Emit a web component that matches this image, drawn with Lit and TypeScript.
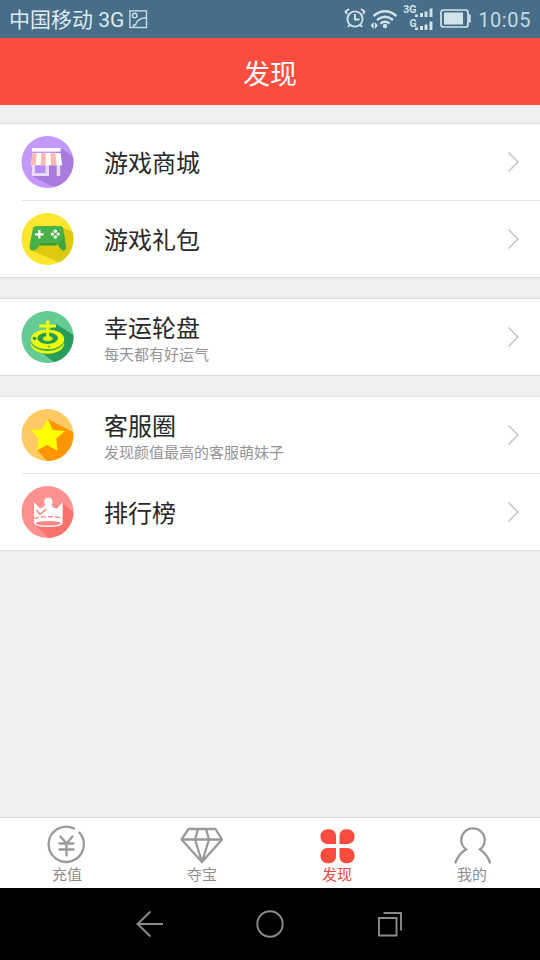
import { LitElement, html, css, svg, nothing, TemplateResult } from "lit";
import { customElement, property } from "lit/decorators.js";
import { classMap } from "lit/directives/class-map.js";

const disc = (id: string, base: string, shade: string, shadow: string, art: TemplateResult) => html`
  <svg width="54" height="54" viewBox="0 0 54 54">
    <defs><clipPath id=${id}><circle cx="26.5" cy="27" r="26"/></clipPath></defs>
    <circle cx="26.5" cy="27" r="26" fill=${base}/>
    <path d=${shadow} fill=${shade} clip-path="url(#${id})"/>
    ${art}
  </svg>`;

const icons: Record<string, TemplateResult> = {
  shop: disc("c1", "#c498fb", "#a97bde", "M39.5 13L56 24V56H40L11 41Z", svg`
    <path d="M13 29h12v10H13z" fill="#b88bf0"/>
    <path d="M11 29h3v9h10.500v-9H28v12H11zM35.700 29h3.500v12h-3.500z" fill="#ead9fc"/>
    <path d="M11 13h28.700v3.600H11z" fill="#fff"/>
    <path d="M11.500 18H39.500l1.800 12.300H10z" fill="#fff"/>
    <path d="M11.500 18h4.200l-1.200 12.300H10zM20.300 18h4.400v12.300h-5zM29.700 18h4.700l1.200 12.300H30z" fill="#fdb9b1"/>`),
  pad: disc("c2", "#fce62d", "#dcc910", "M41 15L56 22V56H52L9 38Z", svg`
    <path d="M17 28h20l-1.500 5.500H18.500z" fill="#369b3a"/>
    <path d="M12 16q1-2 3.500-2h23.500q2.500 0 3.300 2.300l2.500 17.500q.300 4.200-2.200 4.600-1.500.2-3.100-2.200l-3.300-5H20.500l-4.600 5.500q-1.700 1.800-4 1.800Q8.300 38.500 8.500 34z" fill="#48b148"/>
    <path d="M43 22l1.800 12q.2 4.200-2.200 4.600-1.500.2-3.100-2.200l-3.300-5q6-2 6.800-9.400z" fill="#3da640"/>
    <path d="M18.300 18v8.600M14 22.300h8.600" stroke="#fff" stroke-width="2.300"/>
    <g fill="#fff"><circle cx="34.300" cy="19.200" r="1.700"/><circle cx="34.300" cy="25" r="1.700"/><circle cx="31.400" cy="22.100" r="1.700"/><circle cx="37.200" cy="22.100" r="1.700"/></g>`),
  wheel: disc("c3", "#64cb92", "#279d5a", "M35 14L56 27V56H38L11 35Z", svg`
    <ellipse cx="26.500" cy="33.700" rx="16.700" ry="10" fill="#eefb08"/>
    <ellipse cx="26.500" cy="31" rx="16.700" ry="10" fill="#3fb04e"/>
    <ellipse cx="26.500" cy="29.300" rx="16.700" ry="9.800" fill="#eefb08"/>
    <ellipse cx="26.700" cy="28.300" rx="10.300" ry="5.700" fill="#249a50"/>
    <ellipse cx="26.700" cy="28.600" rx="5" ry="2.700" fill="#c9f01c"/>
    <path d="M26.700 10.500V29" stroke="#f5fc08" stroke-width="3"/><path d="M18.300 16H35" stroke="#f5fc08" stroke-width="3"/>
    <circle cx="13.500" cy="28.500" r="1.800" fill="#249a50"/><circle cx="28" cy="36.700" r="1.200" fill="#7ccb30"/>`),
  star: disc("c4", "#ffc964", "#ff9600", "M26.700 11L56 26V56H29L16 42Z", svg`
    <path d="M26.700 11l5 11L44 23l-8.700 7.500 1 12L25.700 37 16 42.500l1.700-12.200L9.500 22l11.500-.7z" fill="#ffff00"/>`),
  crown: disc("c5", "#fe9290", "#fa726e", "M41.500 17L56 31V56H31L13 39Z", svg`
    <path d="M13 17l6 6.500 3.500-1.500q.8-1.500 1.800-2.200a4.300 4.300 0 1 1 6 0q1 1 1.700 2.700l3.700 1L41.700 17v21q-.7 4-14.400 4T13 38z" fill="#fff"/>
    <path d="M15.500 25l3.500 4.500 6.500-5.500" fill="none" stroke="#fa7a77" stroke-width="1.300"/>
    <path d="M13 33.300q14-3.500 28.700 0" fill="none" stroke="#fa8582" stroke-width="1.300" stroke-dasharray="5 2"/>
    <ellipse cx="27.300" cy="38.300" rx="12.500" ry="2.300" fill="#fb8784"/>`),
};

@customElement("status-bar")
class StatusBar extends LitElement {
  static styles = css`
    :host { display: flex; align-items: center; height: 38px; box-sizing: border-box; padding: 1px 9px 0 9px;
      background: #476d88; color: #dcecf1; font: 20px/38px Roboto, "Noto Sans CJK SC", sans-serif; white-space: pre; }
    .grow { flex: 1; }
    .carrier { width: 120px; font-size: 21px; }
    .clock { width: 60px; font-size: 20px; letter-spacing: .6px; color: #c3dae4; text-align: right; }
    svg { display: block; flex: none; margin-top: -1px; }
    .net { font: bold 10.500px Roboto, sans-serif; }
  `;
  render() {
    return html`
      <span class="carrier">中国移动 3G</span>
      <svg width="19" height="19" viewBox="0 0 19 19" fill="none" stroke="#c8dde5" stroke-width="1.400">
        <rect x=".9" y=".9" width="16.600" height="16.600"/><circle cx="5.700" cy="5.500" r="2.300"/><path d="M4.500 17.500V15h2.200Q8 8.500 17 7.500"/>
      </svg>
      <span class="grow"></span>
      <svg width="132" height="38" viewBox="0 0 132 38" fill="none" stroke="#d2e4e9">
        <g stroke-width="1.900"><circle cx="16" cy="19" r="7.600"/><path d="M16 14v5.500h4.500M8 14l-1.500-2.500L10 9M24 14l1.500-2.500L22 9M10.500 25L9 27M21.500 25l1.500 2"/></g>
        <g stroke-width="2.400"><path d="M34.500 16q11.500-9.500 23 0M38 20q8-6.500 16 0M41.500 23.500q4.500-3.500 9 0"/></g>
        <circle cx="46" cy="26" r="2.200" fill="#d2e4e9" stroke="none"/>
        <path d="M31.500 25.500l3.200-3.500v7zM39 25.500L35.800 22v7z" fill="#d2e4e9" stroke="none"/>
        <text class="net" x="64.300" y="13" fill="#d2e4e9" stroke="none">3G</text>
        <text class="net" x="70.500" y="26.500" fill="#d2e4e9" stroke="none">G</text>
        <path d="M77.500 17v-2.500M82.500 17v-4M87 17v-5.500M92 17V8.500M77.500 30v-2.500M82.500 30v-4M87 30v-5.500M92 30v-8.500" stroke-width="2.900"/>
        <rect x="102" y="10" width="27" height="17" rx="2.500" stroke-width="1.700"/>
        <rect x="105" y="12.500" width="19" height="12" fill="#d2e4e9" stroke="none"/>
        <path d="M130.700 14.500v8" stroke-width="2"/>
      </svg>
      <span class="clock">10:05</span>`;
  }
}

@customElement("menu-row")
class MenuRow extends LitElement {
  @property() icon = "";
  @property() label = "";
  @property() note = "";
  static styles = css`
    :host { display: flex; align-items: center; height: 76px; padding: 0 20px 0 21px; }
    svg { display: block; flex: none; }
    .text { flex: 1; margin-left: 29px; }
    .label { font-size: 24px; line-height: 32px; color: #282828; }
    .note { margin-top: 1px; font-size: 15px; line-height: 20px; color: #949494; }
    .one { padding-bottom: 1px; }
  `;
  render() {
    return html`${icons[this.icon]}
      <div class="text ${classMap({ one: !this.note })}">
        <div class="label">${this.label}</div>
        ${this.note ? html`<div class="note">${this.note}</div>` : nothing}
      </div>
      <svg width="14" height="22" viewBox="0 0 14 22" fill="none" stroke="#c9c9c9" stroke-width="1.700"><path d="M2.500 1.500L12 11l-9.500 9.500"/></svg>`;
  }
}

const groups = [
  [["shop", "游戏商城", ""], ["pad", "游戏礼包", ""]],
  [["wheel", "幸运轮盘", "每天都有好运气"]],
  [["star", "客服圈", "发现颜值最高的客服萌妹子"], ["crown", "排行榜", ""]],
];

const tabs = [
  { label: "充值", active: false, icon: svg`<path d="M41 10.500A17.600 17.600 0 1 0 46.300 14.500M27.500 18.500l6 7 6-7M33.500 25.500V37.500M26.500 25.500h14M26.500 31.500h14" stroke-linecap="round"/>` },
  { label: "夺宝", active: false, icon: svg`<path d="M20.500 11h27l6.500 10.500L34 44 13.500 21.500zM13.500 21.500h40M30 11L27 21.500 34 44l7-22.500L38 11" stroke-linejoin="round"/>` },
  { label: "发现", active: true, icon: svg`<path d="M24.500 11.200h2a6.500 6.500 0 0 1 6.500 6.500v8.300h-8.500a7 7 0 0 1-7-7v-.8a7 7 0 0 1 7-7zM44.500 11.200h-2a6.500 6.500 0 0 0-6 6.500v8.300h8a7 7 0 0 0 7-7v-.8a7 7 0 0 0-7-7zM24.500 45.200h2a6.500 6.500 0 0 0 6.500-6.500v-8.700h-8.500a7 7 0 0 0-7 7v1.200a7 7 0 0 0 7 7zM44.500 45.200h-2a6.500 6.500 0 0 1-6-6.500v-8.700h8a7 7 0 0 1 7 7v1.200a7 7 0 0 1-7 7z" fill="#fa4b3f" stroke="none"/>` },
  { label: "我的", active: false, icon: svg`<path d="M17.500 44.500q3-8.500 10.500-13A11.700 11.700 0 1 1 42 31.500q7 4.500 10 13" stroke-linecap="round"/>` },
];

@customElement("app-root")
class AppRoot extends LitElement {
  static styles = css`
    :host { display: flex; flex-direction: column; width: 540px; height: 960px; overflow: hidden; background: #efefef;
      font-family: "Noto Sans CJK SC", sans-serif; }
    .title { height: 67px; flex: none; background: #f94d40; color: #fff; font-size: 27px; line-height: 69px; text-align: center; }
    .list { flex: 1; display: flex; flex-direction: column; gap: 20px; padding-top: 18px; }
    .group { background: #fff; border-top: 1px solid #dedede; border-bottom: 1px solid #dedede; }
    .line { height: 1px; margin-left: 22px; background: #e5e5e5; }
    .tabs { display: grid; grid-template-columns: repeat(4, 135px); height: 70px; border-top: 1px solid #d9d9d9; background: #fff; }
    .tab { display: flex; flex-direction: column; align-items: center; color: #8e8e8e; font-size: 15px; line-height: 19px; }
    .tab svg { display: block; width: 69px; height: 46px; }
    .tab span { margin-right: 1px; }
    .tab.active { color: #e8493c; }
    .nav { height: 72px; flex: none; display: flex; justify-content: center; align-items: center; gap: 90px; background: #000; }
    .nav svg { display: block; }
  `;
  render() {
    return html`
      <status-bar></status-bar>
      <div class="title">发现</div>
      <div class="list">
        ${groups.map(g => html`<div class="group">${g.map(([icon, label, note], i) => html`
          ${i ? html`<div class="line"></div>` : nothing}
          <menu-row .icon=${icon} .label=${label} .note=${note}></menu-row>`)}</div>`)}
      </div>
      <div class="tabs">
        ${tabs.map(t => html`<div class="tab ${classMap({ active: t.active })}">
          <svg viewBox="0 0 69 46" fill="none" stroke="#9a9a9a" stroke-width="2.300">${t.icon}</svg><span>${t.label}</span></div>`)}
      </div>
      <div class="nav">
        <svg width="30" height="30" viewBox="0 0 30 30" fill="none" stroke="#8a8a8a" stroke-width="1.900"><path d="M28 15H2.500M15.500 2.500L2.500 15l13 12.500"/></svg>
        <svg width="30" height="30" viewBox="0 0 30 30" fill="none" stroke="#8a8a8a" stroke-width="1.900"><circle cx="15" cy="15" r="12.700"/></svg>
        <svg width="30" height="30" viewBox="0 0 30 30" fill="none" stroke="#8a8a8a" stroke-width="1.900"><path d="M4 9h17.500v17.500H4zM8.500 4h17.500v17.500"/></svg>
      </div>`;
  }
}
